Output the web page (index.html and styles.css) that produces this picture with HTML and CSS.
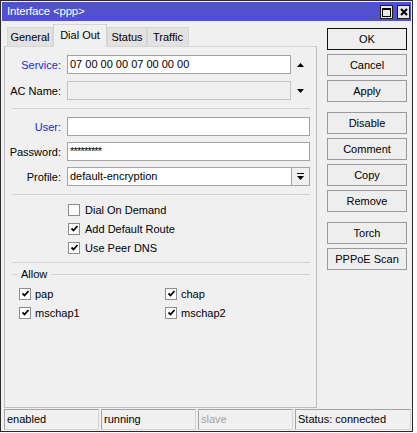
FILE: index.html
```html
<!DOCTYPE html>
<html>
<head>
<meta charset="utf-8">
<title>Interface &lt;ppp&gt;</title>
<link rel="stylesheet" href="styles.css">
</head>
<body>
<div class="window">
  <div class="titlebar">
    <span class="title">Interface &lt;ppp&gt;</span>
    <div class="tbtns">
      <span class="tbtn"><svg width="9" height="9" viewBox="0 0 9 9"><rect x="0.5" y="0.5" width="8" height="8" fill="none" stroke="#000"/><rect x="0" y="0" width="9" height="2" fill="#000"/></svg></span>
      <span class="tbtn"><svg width="8" height="8" viewBox="0 0 8 8"><path d="M1 1 L7 7 M7 1 L1 7" stroke="#000" stroke-width="2"/></svg></span>
    </div>
  </div>
  <div class="main">
    <div class="leftcol">
      <div class="tabs">
        <div class="tab t-general">General</div>
        <div class="tab t-dial active">Dial Out</div>
        <div class="tab t-status">Status</div>
        <div class="tab t-traffic">Traffic</div>
      </div>
      <div class="panel">
        <div class="row r-service">
          <label class="lbl blue">Service:</label>
          <div class="field">
            <div class="input">07 00 00 00 07 00 00 00</div>
            <span class="arrow"><svg width="7" height="4" viewBox="0 0 7 4"><path d="M0 4 L3.5 0 L7 4Z" fill="#000"/></svg></span>
          </div>
        </div>
        <div class="row r-ac">
          <label class="lbl">AC Name:</label>
          <div class="field">
            <div class="input disabled"></div>
            <span class="arrow"><svg width="7" height="4" viewBox="0 0 7 4"><path d="M0 0 L7 0 L3.5 4Z" fill="#000"/></svg></span>
          </div>
        </div>
        <div class="sep s1"></div>
        <div class="row r-user">
          <label class="lbl blue">User:</label>
          <div class="field"><div class="input"></div></div>
        </div>
        <div class="row r-pass">
          <label class="lbl">Password:</label>
          <div class="field"><div class="input pw">*********</div></div>
        </div>
        <div class="row r-profile">
          <label class="lbl">Profile:</label>
          <div class="field">
            <div class="input">default-encryption</div>
            <span class="dropbtn"><svg width="7" height="7" viewBox="0 0 7 7"><rect x="0" y="0" width="7" height="1" fill="#000"/><path d="M0 3 L7 3 L3.5 7Z" fill="#000"/></svg></span>
          </div>
        </div>
        <div class="sep s2"></div>
        <div class="checks">
          <div class="chk"><span class="box"></span><span>Dial On Demand</span></div>
          <div class="chk"><span class="box"><svg width="9" height="9" viewBox="0 0 9 9"><path d="M1.5 4.5 L3.5 6.5 L7.5 2" fill="none" stroke="#000" stroke-width="1.8"/></svg></span><span>Add Default Route</span></div>
          <div class="chk"><span class="box"><svg width="9" height="9" viewBox="0 0 9 9"><path d="M1.5 4.5 L3.5 6.5 L7.5 2" fill="none" stroke="#000" stroke-width="1.8"/></svg></span><span>Use Peer DNS</span></div>
        </div>
        <div class="sep s3"></div>
        <div class="group-head"><span class="gline short"></span><span class="gtext">Allow</span><span class="gline long"></span></div>
        <div class="allow">
          <div class="chk"><span class="box"><svg width="9" height="9" viewBox="0 0 9 9"><path d="M1.5 4.5 L3.5 6.5 L7.5 2" fill="none" stroke="#000" stroke-width="1.8"/></svg></span><span>pap</span></div>
          <div class="chk"><span class="box"><svg width="9" height="9" viewBox="0 0 9 9"><path d="M1.5 4.5 L3.5 6.5 L7.5 2" fill="none" stroke="#000" stroke-width="1.8"/></svg></span><span>chap</span></div>
          <div class="chk"><span class="box"><svg width="9" height="9" viewBox="0 0 9 9"><path d="M1.5 4.5 L3.5 6.5 L7.5 2" fill="none" stroke="#000" stroke-width="1.8"/></svg></span><span>mschap1</span></div>
          <div class="chk"><span class="box"><svg width="9" height="9" viewBox="0 0 9 9"><path d="M1.5 4.5 L3.5 6.5 L7.5 2" fill="none" stroke="#000" stroke-width="1.8"/></svg></span><span>mschap2</span></div>
        </div>
      </div>
    </div>
    <div class="buttons">
      <div class="btn default">OK</div>
      <div class="btn">Cancel</div>
      <div class="btn">Apply</div>
      <div class="btn gap">Disable</div>
      <div class="btn">Comment</div>
      <div class="btn">Copy</div>
      <div class="btn">Remove</div>
      <div class="btn gap">Torch</div>
      <div class="btn">PPPoE Scan</div>
    </div>
  </div>
  <div class="statusbar">
    <div class="cell c1">enabled</div>
    <div class="cell c2">running</div>
    <div class="cell c3 dim">slave</div>
    <div class="cell c4">Status: connected</div>
  </div>
</div>
</body>
</html>
```
FILE: styles.css
```css
html, body {
  margin: 0;
  padding: 0;
}
body {
  background: #ffffff;
  font-family: "Liberation Sans", Arial, sans-serif;
  font-size: 11px;
  color: #000;
}
.window {
  width: 413px;
  height: 432px;
  box-sizing: border-box;
  border: 1px solid #2a2a2a;
  background: #f0f0f0;
  display: flex;
  flex-direction: column;
}
.titlebar {
  margin: 1px 1px 0;
  height: 19px;
  background: #5151cf;
  color: #fff;
  display: flex;
  align-items: flex-start;
  padding: 0 1px 0 5px;
}
.title {
  flex: 1;
  font-size: 11.5px;
  line-height: 19px;
  letter-spacing: -0.2px;
}
.tbtns {
  display: flex;
  gap: 4px;
  margin-top: 3px;
}
.tbtn {
  width: 13px;
  height: 14px;
  box-sizing: border-box;
  border: 1px solid #1e1e1e;
  background: #e6e6e6;
  display: flex;
  align-items: center;
  justify-content: center;
}
.main {
  display: flex;
  padding: 3px 0 0 3px;
}
.leftcol {
  width: 313px;
  display: flex;
  flex-direction: column;
}
.tabs {
  display: flex;
  align-items: flex-end;
  height: 23px;
  padding-left: 3px;
  margin-bottom: -1px;
}
.tab {
  box-sizing: border-box;
  height: 20px;
  border: 1px solid #d6d6d6;
  border-bottom: none;
  background: #e2e2e2;
  text-align: center;
  line-height: 18px;
}
.tab.active {
  height: 23px;
  background: #f0f0f0;
  position: relative;
  z-index: 1;
  line-height: 20px;
}
.t-general { width: 46px; }
.t-dial { width: 54px; }
.t-status { width: 40px; }
.t-traffic { width: 42px; }
.panel {
  box-sizing: border-box;
  height: 362px;
  border: 1px solid #bdbdbd;
  border-top-color: #d6d6d6;
  padding: 8px 6px 0 0;
  display: flex;
  flex-direction: column;
}
.row {
  display: flex;
  align-items: center;
  height: 19px;
}
.r-ac { margin-top: 7px; }
.r-user { margin-top: 8px; }
.r-pass, .r-profile { margin-top: 6px; }
.lbl {
  width: 56px;
  margin-right: 6px;
  text-align: right;
  white-space: nowrap;
}
.lbl.blue { color: #2424d6; }
.field {
  flex: 1;
  display: flex;
  height: 19px;
}
.input {
  flex: 1;
  box-sizing: border-box;
  height: 19px;
  border: 1px solid #a3a3a3;
  background: #fff;
  padding-left: 2px;
  line-height: 17px;
  white-space: nowrap;
  overflow: hidden;
}
.input.disabled {
  background: #f0f0f0;
  border-color: #c3c3c3;
}
.input.pw {
  letter-spacing: -0.8px;
}
.arrow {
  width: 19px;
  display: flex;
  align-items: center;
  justify-content: center;
}
.dropbtn {
  width: 19px;
  box-sizing: border-box;
  border: 1px solid #a3a3a3;
  margin-left: -1px;
  background: #f0f0f0;
  display: flex;
  align-items: center;
  justify-content: center;
}
.sep {
  height: 1px;
  background: #d3d3d3;
  margin-left: 7px;
}
.s1, .s2 { margin-top: 8px; }
.s3 { margin-top: 5px; }
.checks {
  margin-top: 5px;
  padding-left: 63px;
}
.chk {
  display: flex;
  align-items: center;
  height: 19px;
  gap: 5px;
  white-space: nowrap;
}
.box {
  width: 12px;
  height: 12px;
  box-sizing: border-box;
  border: 1px solid #8c8c8c;
  background: #fff;
  display: flex;
  align-items: center;
  justify-content: center;
}
.group-head {
  margin-top: 4px;
  height: 14px;
  display: flex;
  align-items: center;
  padding-left: 7px;
}
.gline {
  height: 1px;
  background: #d3d3d3;
}
.gline.short { width: 6px; }
.gline.long { flex: 1; }
.gtext {
  margin: 0 4px 0 3px;
}
.allow {
  margin-top: 3px;
  padding-left: 14px;
  display: grid;
  grid-template-columns: 146px 1fr;
}
.allow .chk { gap: 4px; }
.buttons {
  margin-left: 10px;
  margin-top: 4px;
  width: 80px;
  display: flex;
  flex-direction: column;
  gap: 4px;
}
.btn {
  box-sizing: border-box;
  height: 22px;
  border: 1px solid #9a9a9a;
  background: #eeeeee;
  text-align: center;
  line-height: 20px;
  font-size: 11px;
}
.btn.default {
  border-color: #111;
}
.btn.gap {
  margin-top: 6px;
}
.statusbar {
  margin-top: 1px;
  padding-left: 3px;
  display: flex;
  gap: 2px;
  height: 21px;
}
.cell {
  box-sizing: border-box;
  height: 21px;
  border: 1px solid;
  border-color: #a2a2a2 #d4d4d4 #d4d4d4 #a2a2a2;
  padding-left: 2px;
  line-height: 19px;
  white-space: nowrap;
}
.c1, .c2, .c3 { width: 95px; }
.c4 { width: 116px; }
.dim { color: #a3a3a3; }
```
